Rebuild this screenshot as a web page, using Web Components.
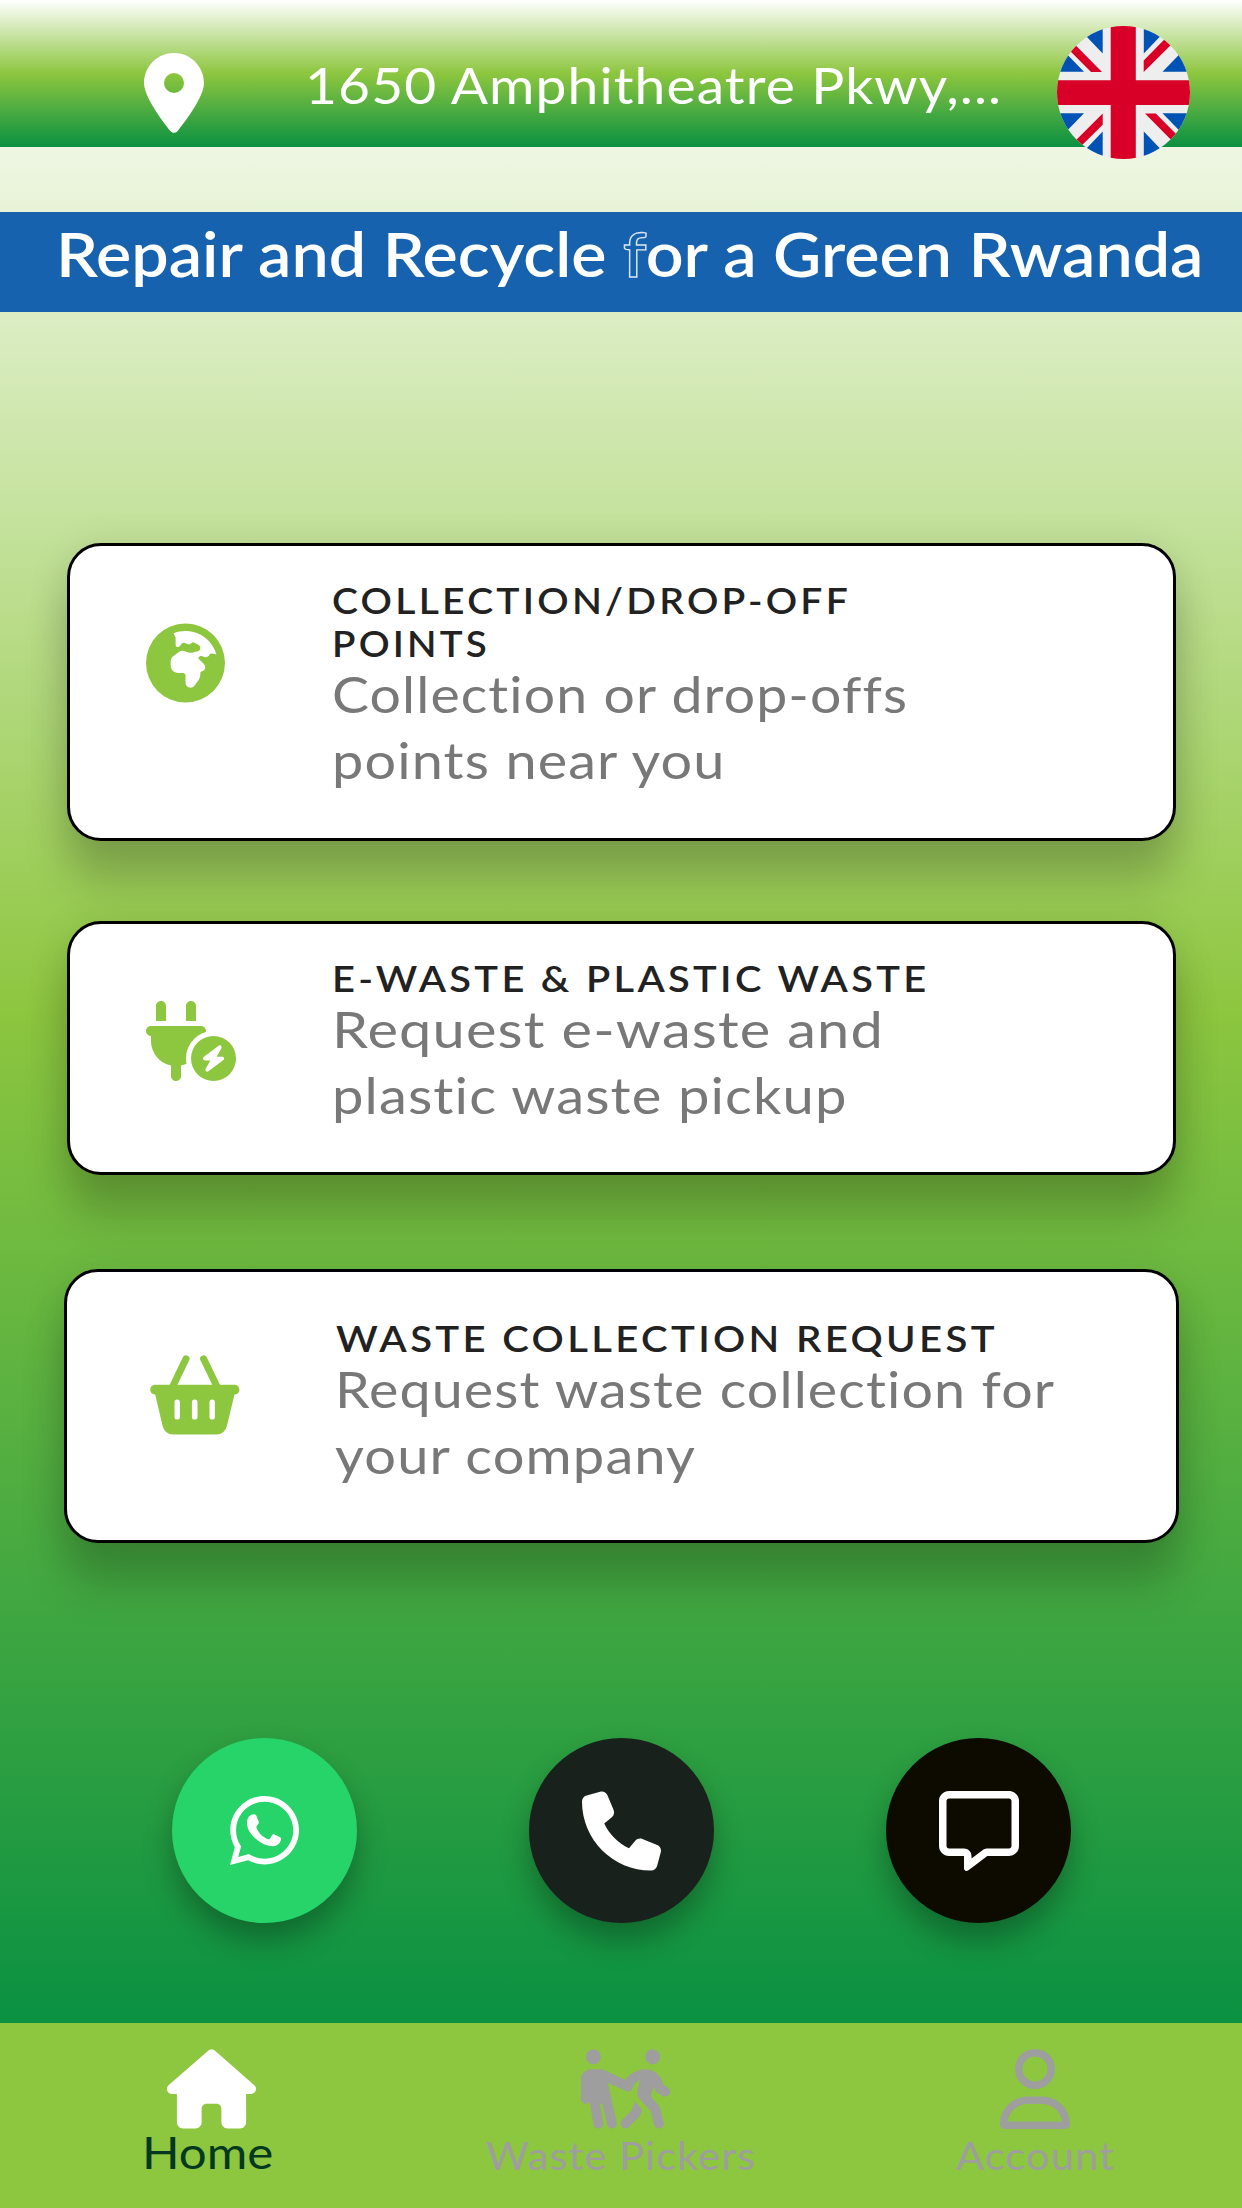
<!DOCTYPE html>
<html lang="en">
<head>
<meta charset="utf-8">
<title>Repair and Recycle for a Green Rwanda</title>
<style>
html,body{margin:0;padding:0}
body{width:1242px;height:2208px;overflow:hidden;font-family:Lato,"Open Sans",sans-serif}
</style>
</head>
<body>
<recycle-home></recycle-home>
<script>
const ICONS = {
  pin: ['0 0 384 512', '<path d="M215.7 499.2C267 435 384 279.4 384 192C384 86 298 0 192 0S0 86 0 192c0 87.4 117 243 168.3 307.2c12.3 15.3 35.1 15.3 47.4 0zM192 128a64 64 0 1 1 0 128 64 64 0 1 1 0-128z"/>'],
  globe: ['0 0 512 512', '<path fill-rule="evenodd" d="M177.8 63.2l10 17.4c2.8 4.8 4.2 10.3 4.2 15.9v41.4c0 3.9 1.6 7.7 4.3 10.4c6.2 6.2 16.5 5.7 22-1.2l13.6-17c4.7-5.9 12.9-7.7 19.6-4.3l15.2 7.6c3.4 1.7 7.2 2.6 11 2.6c6.5 0 12.8-2.6 17.4-7.2l3.9-3.9c2.9-2.9 7.3-3.6 11-1.8l29.2 14.6c7.8 3.9 12.6 11.8 12.6 20.5c0 10.5-7.1 19.6-17.3 22.2l-35.4 8.8c-7.4 1.8-15.1 1.5-22.4-.9l-32-10.7c-3.3-1.1-6.7-1.7-10.2-1.7c-7 0-13.8 2.3-19.4 6.5L176 212c-10.1 7.6-16 19.4-16 32v28c0 26.5 21.5 48 48 48h32c8.8 0 16 7.2 16 16v48c0 17.7 14.3 32 32 32c10.1 0 19.6-4.7 25.6-12.8l25.6-34.1c8.3-11.1 12.8-24.6 12.8-38.4V318.6c0-3.9 2.6-7.3 6.4-8.2l5.3-1.3c11.9-3 20.3-13.7 20.3-26c0-7.1-2.8-13.9-7.8-18.9l-33.5-33.5c-3.7-3.7-3.7-9.7 0-13.4c5.7-5.7 14.1-7.7 21.8-5.1l14.1 4.7c12.3 4.1 25.7-1.5 31.5-13c3.5-7 11.2-10.8 18.9-9.2l27.4 5.5C432 112.4 351.5 48 256 48c-27.7 0-54 5.4-78.2 15.2zM0 256a256 256 0 1 1 512 0A256 256 0 1 1 0 256z"/>'],
  plug: ['0 0 576 512', '<path fill-rule="evenodd" d="M96 0C78.3 0 64 14.3 64 32v96h64V32c0-17.7-14.3-32-32-32zM288 0c-17.7 0-32 14.3-32 32v96h64V32c0-17.7-14.3-32-32-32zM32 160c-17.7 0-32 14.3-32 32s14.3 32 32 32v32c0 77.4 55 142 128 156.8V480c0 17.7 14.3 32 32 32s32-14.3 32-32V412.8c12.3-2.5 24.1-6.4 35.1-11.5c-2.1-10.8-3.1-21.9-3.1-33.3c0-80.3 53.8-148 127.3-169.2c.5-2.2 .7-4.5 .7-6.8c0-17.7-14.3-32-32-32H32zM432 512a144 144 0 1 0 0-288 144 144 0 1 0 0 288zm47.9-225c4.3 3.7 5.4 9.9 2.6 14.9L452.4 356H488c5.2 0 9.8 3.3 11.4 8.2s-.1 10.3-4.2 13.4l-96 72c-4.5 3.4-10.8 3.2-15.1-.6s-5.4-9.9-2.6-14.9L411.6 380H376c-5.2 0-9.8-3.3-11.4-8.2s.1-10.3 4.2-13.4l96-72c4.5-3.4 10.8-3.2 15.1 .6z"/>'],
  basket: ['0 0 90 80', '<path d="M36 3.8L22.5 32M53.6 3.8L67.2 32" fill="none" stroke="currentColor" stroke-width="7" stroke-linecap="round"/><path fill-rule="evenodd" d="M5 29.8H84.5a4.9 4.9 0 0 1 0 9.8L77 70.5Q75 79.5 66 79.5H23.5Q14.500 79.500 12.500 70.500L5.200 39.600a4.900 4.900 0 0 1 -.2 -9.800zM27.200 44.500q-2.700 0-2.700 2.500V62q0 2.600 2.700 2.600t2.700-2.600V47q0-2.500-2.700-2.500zM44.700 44.500q-2.800 0-2.800 2.500V62q0 2.600 2.800 2.600t2.800-2.600V47q0-2.500-2.800-2.500zM62.200 44.500q-2.700 0-2.700 2.500V62q0 2.600 2.700 2.600t2.700-2.600V47q0-2.500-2.700-2.500z"/>'],
  whatsapp: ['0 0 69 69', '<path transform="scale(.154) translate(0 -32)" d="M380.900 97.100C339 55.100 283.200 32 223.900 32c-122.400 0-222 99.600-222 222 0 39.100 10.200 77.300 29.600 111L0 480l117.700-30.900c32.400 17.700 68.900 27 106.100 27h.1c122.300 0 224.100-99.600 224.100-222 0-59.300-25.200-115-67.100-157zm-157 341.600c-33.200 0-65.700-8.900-94-25.700l-6.700-4-69.800 18.300L72 359.200l-4.400-7c-18.500-29.400-28.200-63.300-28.200-98.200 0-101.700 82.800-184.500 184.600-184.500 49.300 0 95.600 19.200 130.400 54.100 34.800 34.900 56.200 81.200 56.100 130.500 0 101.800-84.900 184.600-186.600 184.600z"/><path d="M17 27C17 21 20.500 18.300 24 18.300C25.500 18.300 26 19 26.500 20L28.800 26C29.300 27.500 26.500 29.500 26.300 31C28 37 33 41.500 39 43.500C40.500 43 41.500 39 43.500 38L50.500 41.500C52.500 43.500 49 50.300 43 50.300C31 50 17 38 17 27Z"/>'],
  phone: ['0 0 512 512', '<path d="M164.900 24.600c-7.700-18.600-28-28.500-47.400-23.200l-88 24C12.100 30.200 0 46 0 64C0 311.400 200.600 512 448 512c18 0 33.800-12.100 38.600-29.500l24-88c5.300-19.400-4.600-39.700-23.200-47.400l-96-40c-16.300-6.800-35.200-2.100-46.300 11.600L304.700 368C234.300 334.700 177.300 277.700 144 207.300L193.300 167c13.700-11.200 18.400-30 11.600-46.300l-40-96z"/>'],
  chat: ['0 0 512 512', '<path d="M160 368c26.500 0 48 21.500 48 48v16l72.500-54.400c8.300-6.200 18.400-9.600 28.800-9.600H448c8.800 0 16-7.200 16-16V64c0-8.800-7.200-16-16-16H64c-8.800 0-16 7.200-16 16V352c0 8.800 7.200 16 16 16h96zm48 124l-.2 .2-5.100 3.800-17.100 12.800c-4.800 3.600-11.300 4.200-16.800 1.500s-8.800-8.200-8.800-14.300V474.700v-6.400V468v-4V416H112 64c-35.300 0-64-28.700-64-64V64C0 28.700 28.700 0 64 0H448c35.300 0 64 28.700 64 64V352c0 35.300-28.700 64-64 64H309.300L208 492z"/>'],
  home: ['0 0 576 512', '<path d="M575.800 255.500c0 18-15 32.100-32 32.100h-32l.7 160.200c0 2.700-.2 5.400-.5 8.100V472c0 22.100-17.900 40-40 40H456c-1.100 0-2.200 0-3.300-.1c-1.400 .1-2.800 .1-4.200 .1H416 392c-22.100 0-40-17.900-40-40V448 384c0-17.700-14.300-32-32-32H256c-17.700 0-32 14.300-32 32v64 24c0 22.100-17.900 40-40 40H160 128.100c-1.500 0-3-.1-4.500-.2c-1.200 .1-2.400 .2-3.600 .2H104c-22.100 0-40-17.900-40-40V360c0-.9 0-1.900 .1-2.800V287.600H32c-18 0-32-14-32-32.100c0-9 3-17 10-24L266.400 8c7-7 15-8 22-8s15 2 21 7L564.800 231.500c8 7 12 15 11 24z"/>'],
  people: ['0 0 576 512', '<path d="M80 96A48 48 0 1 0 80 0a48 48 0 1 0 0 96zM64 128c-35.300 0-64 28.700-64 64V320c0 17.700 14.300 32 32 32c9.800 0 18.500-4.400 24.400-11.200L80.400 485.300c2.900 17.400 19.400 29.200 36.800 26.300s29.200-19.400 26.300-36.800L123.100 352h15.700l30 134.900c3.800 17.300 20.900 28.100 38.200 24.300s28.100-20.900 24.300-38.200l-57.300-258 116.300 53.800c.5 .3 1.100 .5 1.600 .7c8.600 3.600 18 3.100 25.900-.7c3.400-1.600 6.600-3.900 9.300-6.700c3.100-3.200 5.500-7 7.100-11.400c.1-.3 .2-.7 .3-1l2.500-7.500c5.700-17.100 18.300-30.900 34.700-38.200l8-3.500c1-.4 1.900-.8 2.900-1.200l-16.900 63.500c-5.600 21.100-.1 43.600 14.700 59.700l70.700 77.100 22 88.100c4.300 17.100 21.700 27.600 38.800 23.300s27.600-21.700 23.300-38.800l-23-92.100c-1.900-7.800-5.800-14.900-11.200-20.800l-49.500-54 19.300-65.500 9.600 23c4.400 10.600 12.500 19.300 22.800 24.500l26.700 13.300c15.800 7.900 35 1.500 42.900-14.300s1.500-35-14.300-42.900L537 232.700l-15.300-36.800C504.500 154.800 464.300 128 419.700 128c-22.800 0-45.300 4.800-66.100 14l-8 3.500c-24.400 10.900-44.600 29-58.100 51.600L157.300 136.900C144.700 131 130.900 128 117 128H64zM464 96a48 48 0 1 0 0-96 48 48 0 1 0 0 96zM349.700 335.600l-25 62.400-59.400 59.400c-12.500 12.500-12.500 32.800 0 45.300s32.800 12.500 45.300 0l62.300-62.300c4.500-4.500 8.100-9.800 10.500-15.700L396 391.500l-4.600-5z"/>'],
  user: ['0 0 448 512', '<path d="M304 128a80 80 0 1 0-160 0 80 80 0 1 0 160 0zM96 128a128 128 0 1 1 256 0A128 128 0 1 1 96 128zM49.300 464H398.700c-8.900-63.300-63.300-112-129-112H178.300c-65.700 0-120.100 48.700-129 112zM0 482.300C0 383.800 79.800 304 178.300 304h91.400C368.200 304 448 383.800 448 482.300c0 16.400-13.300 29.700-29.700 29.700H29.700C13.300 512 0 498.700 0 482.300z"/>']
};

class AppIcon extends HTMLElement {
  connectedCallback() {
    const [box, body] = ICONS[this.getAttribute('name')];
    const w = this.getAttribute('w'), h = this.getAttribute('h');
    this.attachShadow({mode: 'open'}).innerHTML = `<style>:host{display:block;flex:none;width:${w}px;height:${h}px}svg{display:block;width:100%;height:100%;overflow:visible}</style><svg viewBox="${box}" fill="currentColor">${body}</svg>`;
  }
}

// One line of text stretched to a given advance width.
class FitText extends HTMLElement {
  connectedCallback() {
    const w = +this.getAttribute('width');
    this.attachShadow({mode: 'open'}).innerHTML = `<style>:host{display:block;flex:none;width:${w}px;white-space:nowrap;font-variant-ligatures:none}span{display:inline-block;transform-origin:0 50%;vertical-align:top}</style><span><slot></slot></span>`;
    const s = this.shadowRoot.querySelector('span');
    s.style.transform = `scaleX(${w / s.offsetWidth})`;
  }
}

class UkFlag extends HTMLElement {
  connectedCallback() {
    this.attachShadow({mode: 'open'}).innerHTML = `<style>:host{display:block;width:133px;height:133px;border-radius:50%;overflow:hidden}svg{display:block}</style>
    <svg width="133" height="133" viewBox="0 0 133 133"><path fill="#eee" d="M0 0H133V133H0z"/>
    <g fill="#0052b4"><path d="M45.700-13V27.500L17.500-2zM-9 45.700H27L-2 16z"/><path transform="matrix(-1 0 0 1 132.500 0)" d="M45.700-13V27.500L17.500-2zM-9 45.700H27L-2 16z"/><path transform="matrix(1 0 0 -1 0 133)" d="M45.700-13V27.500L17.500-2zM-9 45.700H27L-2 16z"/><path transform="matrix(-1 0 0 -1 132.500 133)" d="M45.700-13V27.500L17.500-2zM-9 45.700H27L-2 16z"/></g>
    <g fill="#d80027"><path d="M53.700 0H78.800V54.300H133V79H78.800V133H53.700V79H0V54.300H53.700z"/><path d="M-1 10.800V-.4L45 46H34zM86.700 34.500L128-7.500L133 0L86.700 46zM45.700 87.500V98.700L10 134L0 133zM88 87.600H98.800L134 123V134z"/></g></svg>`;
  }
}

class TopBar extends HTMLElement {
  connectedCallback() {
    this.attachShadow({mode: 'open'}).innerHTML = `<style>
    :host{display:flex;position:relative;height:147.300px;box-sizing:border-box;padding-left:144px;align-items:flex-start;color:#fff;background:linear-gradient(#fff 0,#8dc63f 50%,#0a9142 100%)}
    app-icon{margin-top:53px}
    fit-text{margin:51.500px 0 0 101px;font-size:50px;line-height:66px;letter-spacing:1px}
    uk-flag{position:absolute;left:1056.500px;top:26px}
    </style><app-icon name="pin" w="60" h="80"></app-icon><fit-text width="697"><slot></slot></fit-text><uk-flag></uk-flag>`;
  }
}

class SloganBanner extends HTMLElement {
  connectedCallback() {
    this.attachShadow({mode: 'open'}).innerHTML = `<style>
    :host{display:block;height:99.300px;box-sizing:border-box;padding:2px 0 0 56px;background:#1762ae;color:#fff}
    fit-text{font-size:61px;font-weight:600;line-height:80px}
    </style><fit-text width="1148"><slot></slot></fit-text>`;
  }
}

class ServiceCard extends HTMLElement {
  connectedCallback() {
    this.attachShadow({mode: 'open'}).innerHTML = `<style>
    :host{display:flex;box-sizing:border-box;align-items:flex-start;background:#fff;border:3px solid #000;border-radius:34px;box-shadow:0 44px 44px rgba(0,0,0,.17),0 8px 40px rgba(0,0,0,.13)}
    app-icon{color:#8dc63f;margin:var(--icon-top,76.500px) 0 0 var(--icon-left,76px)}
    .icon{flex:none;width:262px}
    .body{padding-top:var(--body-top,33px)}
    ::slotted([slot=title]){font-size:36px;font-weight:600;line-height:43px;letter-spacing:3px;color:#222}
    .desc{margin-top:-4px}
    ::slotted(:not([slot])){font-size:50px;line-height:66px;letter-spacing:1px;color:#787878}
    </style><div class="icon"><app-icon name="${this.getAttribute('icon')}" w="${this.getAttribute('icon-width')}" h="80"></app-icon></div><div class="body"><slot name="title"></slot><div class="desc"><slot></slot></div></div>`;
  }
}

class RoundButton extends HTMLElement {
  connectedCallback() {
    this.attachShadow({mode: 'open'}).innerHTML = `<style>:host{display:flex;width:185px;height:185px;border-radius:50%;align-items:center;justify-content:center;color:#fff;box-shadow:0 17px 30px rgba(0,0,0,.3)}</style><slot></slot>`;
  }
}

class NavTab extends HTMLElement {
  connectedCallback() {
    this.attachShadow({mode: 'open'}).innerHTML = `<style>:host{display:flex;flex:1;flex-direction:column;align-items:center;color:#9e9e9e;padding-top:25.500px;font-size:38px;line-height:50px;letter-spacing:1px}
    :host([active]){color:#fff;font-size:44px;letter-spacing:0}
    app-icon{margin-left:var(--icon-shift,0)}
    .label{margin-top:1.500px}
    :host([active]) .label{color:#04381f;margin-top:-1.500px}</style><app-icon name="${this.getAttribute('icon')}" w="${this.getAttribute('icon-width')}" h="80"></app-icon><div class="label"><slot></slot></div>`;
  }
}

class RecycleHome extends HTMLElement {
  connectedCallback() {
    this.attachShadow({mode: 'open'}).innerHTML = `<style>
    :host{display:flex;flex-direction:column;width:1242px;height:2208px}
    main{flex:none;height:2023.300px;background:linear-gradient(#fff 0,#8dc63f 50%,#0a9142 100%)}
    slogan-banner{margin-top:65px}
    .outline{color:#1762ae;-webkit-text-stroke:1.300px #d9e6f4}
    .cards{display:flex;flex-direction:column;padding:231.700px 66px 0 67px}
    .c1{height:298px}.c2{height:254px;margin-top:80px}
    .c3{height:274.500px;margin:93.700px -3px 0;--icon-top:83px;--icon-left:82.500px;--body-top:45px}
    .c3 [slot=title]{margin-left:7px}.c3 .t{margin-left:6px}
    .actions{display:flex;justify-content:space-between;padding:195px 171px 0 172px}
    nav{display:flex;flex:1;background:#8dc63f}
    .n1{--icon-shift:9px}.n2{--icon-shift:9px}
    </style>
    <main>
      <top-bar>1650 Amphitheatre Pkwy,...</top-bar>
      <slogan-banner>Repair and Recycle <span class="outline">f</span>or a Green Rwanda</slogan-banner>
      <div class="cards">
        <service-card class="c1" icon="globe" icon-width="79">
          <fit-text slot="title" width="519">COLLECTION/DROP-OFF</fit-text><fit-text slot="title" width="158">POINTS</fit-text>
          <fit-text width="576">Collection or drop-offs</fit-text><fit-text width="393">points near you</fit-text>
        </service-card>
        <service-card class="c2" icon="plug" icon-width="90">
          <fit-text slot="title" width="598">E-WASTE &amp; PLASTIC WASTE</fit-text>
          <fit-text width="552">Request e-waste and</fit-text><fit-text width="516">plastic waste pickup</fit-text>
        </service-card>
        <service-card class="c3" icon="basket" icon-width="90">
          <fit-text slot="title" width="662">WASTE COLLECTION REQUEST</fit-text>
          <fit-text class="t" width="720">Request waste collection for</fit-text><fit-text class="t" width="361">your company</fit-text>
        </service-card>
      </div>
      <div class="actions">
        <round-button style="background:#27d469"><app-icon name="whatsapp" w="69" h="69"></app-icon></round-button>
        <round-button style="background:#19211c"><app-icon name="phone" w="79" h="80"></app-icon></round-button>
        <round-button style="background:#0d0b00"><app-icon name="chat" w="80" h="80"></app-icon></round-button>
      </div>
    </main>
    <nav>
      <nav-tab class="n1" active icon="home" icon-width="89"><fit-text width="131">Home</fit-text></nav-tab>
      <nav-tab class="n2" icon="people" icon-width="89"><fit-text width="270">Waste Pickers</fit-text></nav-tab>
      <nav-tab icon="user" icon-width="70"><fit-text width="159">Account</fit-text></nav-tab>
    </nav>`;
  }
}
customElements.define('app-icon', AppIcon);
customElements.define('uk-flag', UkFlag);
customElements.define('top-bar', TopBar);
customElements.define('slogan-banner', SloganBanner);
customElements.define('service-card', ServiceCard);
customElements.define('round-button', RoundButton);
customElements.define('nav-tab', NavTab);
customElements.define('recycle-home', RecycleHome);
customElements.define('fit-text', FitText);
</script>
</body>
</html>
